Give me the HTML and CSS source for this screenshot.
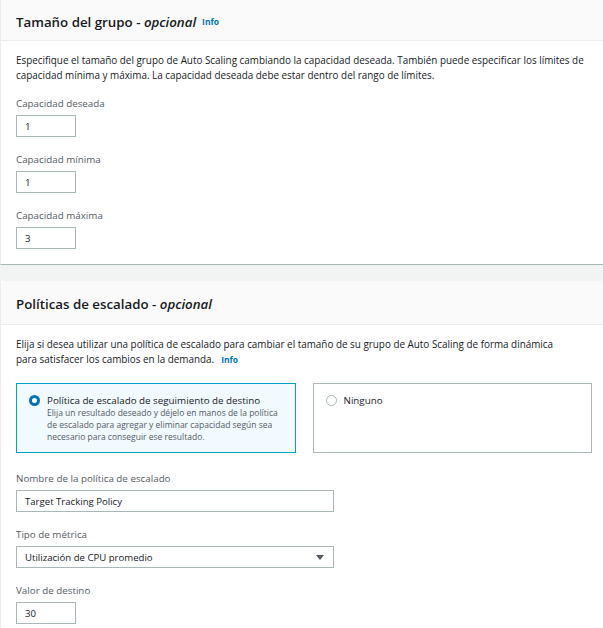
FILE: index.html
```html
<!DOCTYPE html>
<html lang="es">
<head>
<meta charset="utf-8">
<link rel="stylesheet" href="styles.css">
</head>
<body>
<div class="page">
  <section class="card first">
    <div class="card-header">
      <h2 class="title">Tamaño del grupo - <em>opcional</em></h2>
      <a class="info">Info</a>
    </div>
    <div class="card-body">
      <p class="desc">Especifique el tamaño del grupo de Auto Scaling cambiando la capacidad deseada. También puede especificar los límites de capacidad mínima y máxima. La capacidad deseada debe estar dentro del rango de límites.</p>
      <div class="field">
        <label class="label">Capacidad deseada</label>
        <div class="input small">1</div>
      </div>
      <div class="field">
        <label class="label">Capacidad mínima</label>
        <div class="input small">1</div>
      </div>
      <div class="field">
        <label class="label">Capacidad máxima</label>
        <div class="input small">3</div>
      </div>
    </div>
  </section>
  <section class="card second">
    <div class="card-header">
      <h2 class="title">Políticas de escalado - <em>opcional</em></h2>
    </div>
    <div class="card-body">
      <p class="desc">Elija si desea utilizar una política de escalado para cambiar el tamaño de su grupo de Auto Scaling de forma dinámica para satisfacer los cambios en la demanda.<a class="info">Info</a></p>
      <div class="tiles">
        <div class="tile selected">
          <span class="radio on"></span>
          <div class="tile-text">
            <div class="tile-title">Política de escalado de seguimiento de destino</div>
            <div class="tile-desc">Elija un resultado deseado y déjelo en manos de la política de escalado para agregar y eliminar capacidad según sea necesario para conseguir ese resultado.</div>
          </div>
        </div>
        <div class="tile">
          <span class="radio"></span>
          <div class="tile-text">
            <div class="tile-title">Ninguno</div>
          </div>
        </div>
      </div>
      <div class="field">
        <label class="label">Nombre de la política de escalado</label>
        <div class="input wide">Target Tracking Policy</div>
      </div>
      <div class="field">
        <label class="label">Tipo de métrica</label>
        <div class="input wide select">Utilización de CPU promedio
          <svg class="caret" width="8" height="5" viewBox="0 0 8 5"><path d="M0 0h8L4 5z" fill="#545b64"/></svg>
        </div>
      </div>
      <div class="field">
        <label class="label">Valor de destino</label>
        <div class="input small">30</div>
      </div>
    </div>
  </section>
</div>
</body>
</html>
```
FILE: styles.css
```css
* { box-sizing: border-box; }
html, body { margin: 0; padding: 0; }
body {
  background: #f2f3f3;
  font-family: "Open Sans", "Noto Sans", sans-serif;
  color: #16191f;
  width: 603px;
  height: 628px;
  overflow: hidden;
}
.page {
  display: flex;
  flex-direction: column;
  gap: 16px;
}
.card {
  background: #ffffff;
  border-left: 1px solid #eaeded;
}
.card.first {
  border-bottom: 1px solid #aab7b8;
}
.card-header {
  background: #fafafa;
  border-bottom: 1px solid #eaeded;
  display: flex;
  align-items: center;
  gap: 6px;
  padding: 3px 15px 0;
  height: 41px;
}
.card.second .card-header { height: 44px; }
.title {
  margin: 0;
  font-size: 13.3px;
  font-weight: 600;
  color: #16191f;
}
.title em { font-style: italic; }
.info {
  color: #0073bb;
  font-weight: 700;
  font-size: 8.5px;
  line-height: 12px;
}
.card-body {
  padding: 12px 16px 15px 15px;
}
.desc {
  margin: 0 0 14px;
  font-size: 9.9px;
  line-height: 15px;
  color: #16191f;
  padding-right: 0;
}
.card.second .desc { padding-right: 12px; }
.desc .info { margin-left: 7px; }
.field {
  display: flex;
  flex-direction: column;
  gap: 5px;
  margin-bottom: 16px;
}
.field:last-child { margin-bottom: 0; }
.label {
  font-size: 9.8px;
  line-height: 13px;
  color: #545b64;
}
.input {
  height: 22px;
  border: 1px solid #aab7b8;
  background: #fff;
  font-size: 9.6px;
  color: #16191f;
  display: flex;
  align-items: center;
  padding: 0 8px;
}
.input.small { width: 60px; }
.input.wide { width: 318px; }
.input.select { justify-content: space-between; padding-right: 9px; }
.tiles {
  display: flex;
  gap: 17px;
  margin: 16px -5px 19px 0;
}
.tile {
  flex: 1;
  height: 70px;
  border: 1px solid #aab7b8;
  background: #fff;
  display: flex;
  gap: 7px;
  padding: 10px 9px 0 12px;
}
.tile.selected {
  background: #f1faff;
  border-color: #00a1c9;
}
.radio {
  flex: none;
  width: 11px;
  height: 11px;
  border-radius: 50%;
  border: 1px solid #aab7b8;
  margin-top: 1px;
  background: #fff;
}
.radio.on {
  border: 3px solid #0073bb;
}
.tile-title {
  font-size: 9.8px;
  line-height: 13px;
  color: #16191f;
}
.tile-desc {
  font-size: 8.5px;
  line-height: 12px;
  color: #545b64;
}
```
